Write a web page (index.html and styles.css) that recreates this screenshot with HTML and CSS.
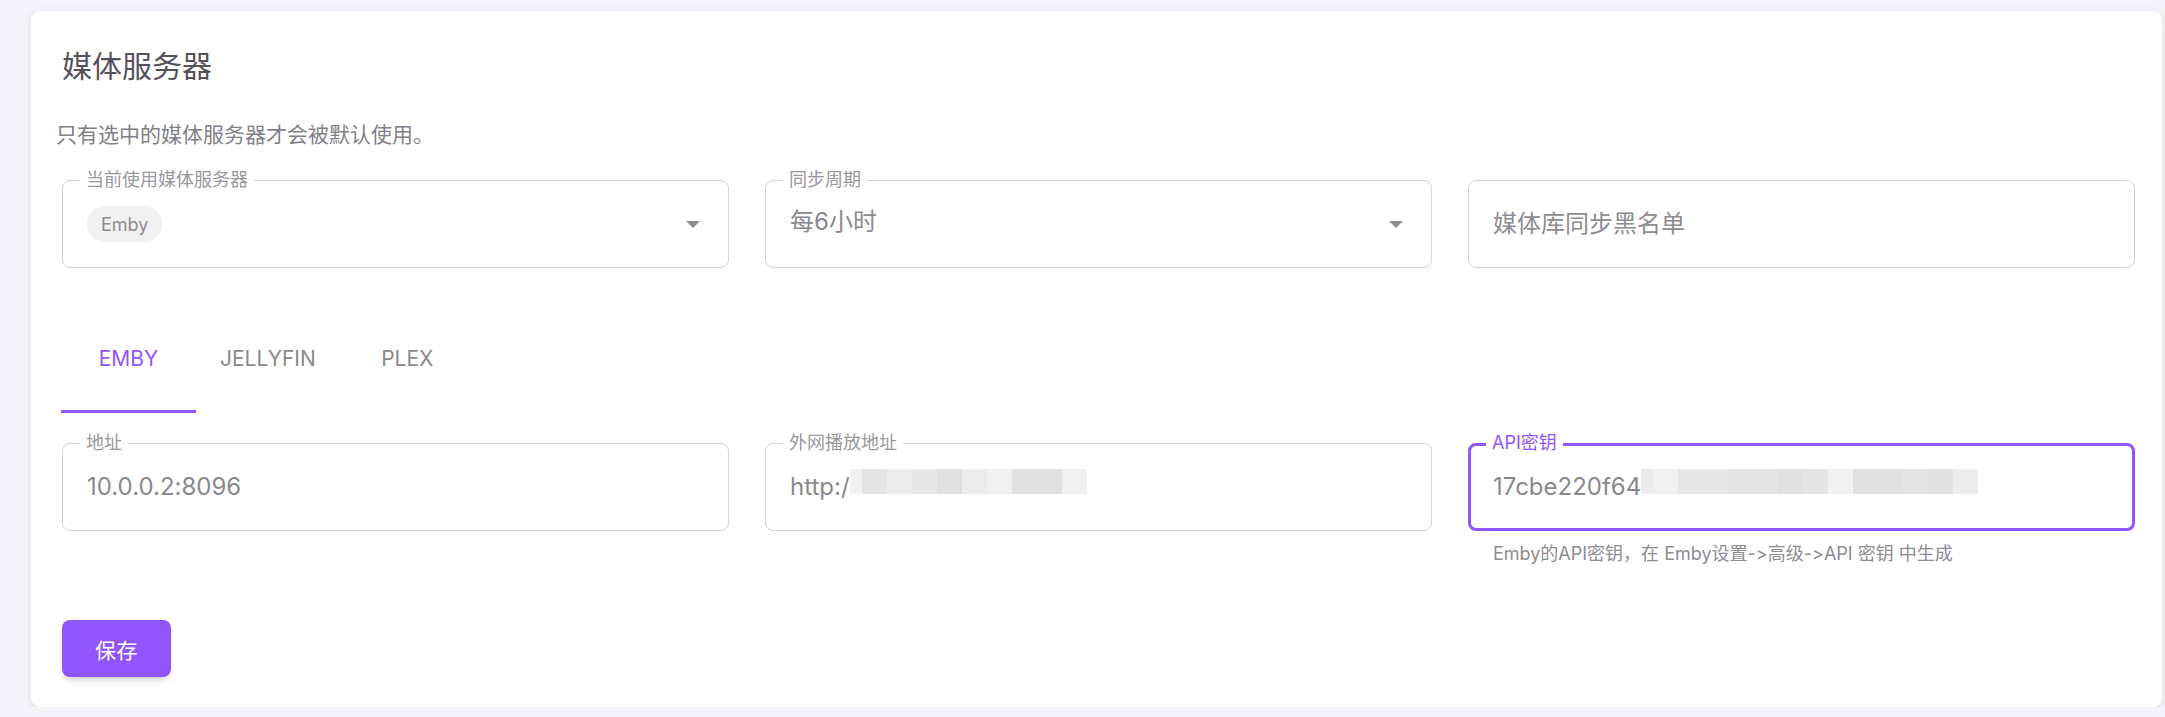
FILE: index.html
```html
<!DOCTYPE html>
<html lang="zh-CN">
<head>
    <meta charset="UTF-8">
    <meta name="viewport" content="width=device-width, initial-scale=1.0">
    <title>媒体服务器</title>
    <link rel="stylesheet" href="styles.css">
</head>
<body>
    <div class="card">
        <h2 class="card-title">媒体服务器</h2>
        <p class="card-subtitle">只有选中的媒体服务器才会被默认使用。</p>

        <div class="row">
            <div class="col">
                <div class="field">
                    <span class="field-label">当前使用媒体服务器</span>
                    <span class="chip">Emby</span>
                    <svg class="caret" width="14" height="7" viewBox="0 0 14 7"><path d="M0 0 L14 0 L7 7 Z" /></svg>
                </div>
            </div>
            <div class="col">
                <div class="field">
                    <span class="field-label">同步周期</span>
                    <span class="field-value select-value">每6小时</span>
                    <svg class="caret" width="14" height="7" viewBox="0 0 14 7"><path d="M0 0 L14 0 L7 7 Z" /></svg>
                </div>
            </div>
            <div class="col">
                <div class="field">
                    <span class="field-placeholder">媒体库同步黑名单</span>
                </div>
            </div>
        </div>

        <div class="tabs">
            <div class="tab active">EMBY</div>
            <div class="tab">JELLYFIN</div>
            <div class="tab">PLEX</div>
        </div>

        <div class="row row-second">
            <div class="col">
                <div class="field">
                    <span class="field-label">地址</span>
                    <span class="field-value">10.0.0.2:8096</span>
                </div>
            </div>
            <div class="col">
                <div class="field">
                    <span class="field-label">外网播放地址</span>
                    <span class="field-value">http:/<span class="blur"><i class="px-first px-l1"></i><i class="px-d2"></i><i class="px-l2"></i><i class="px-d1"></i><i class="px-d3"></i><i class="px-l2"></i><i class="px-l1"></i><i class="px-d3"></i><i class="px-d3"></i><i class="px-l1"></i></span></span>
                </div>
            </div>
            <div class="col">
                <div class="field focused">
                    <span class="field-label">API密钥</span>
                    <span class="field-value">17cbe220f64<span class="blur"><i class="px-first px-l2"></i><i class="px-l1"></i><i class="px-d1"></i><i class="px-d1"></i><i class="px-d2"></i><i class="px-d2"></i><i class="px-d3"></i><i class="px-d2"></i><i class="px-l1"></i><i class="px-d3"></i><i class="px-d3"></i><i class="px-d2"></i><i class="px-d3"></i><i class="px-l2"></i></span></span>
                </div>
                <div class="field-hint">Emby的API密钥，在 Emby设置-&gt;高级-&gt;API 密钥 中生成</div>
            </div>
        </div>

        <button class="btn-save">保存</button>
    </div>
</body>
</html>
```

FILE: styles.css
```css
body {
    margin: 0;
    padding: 11px 0 0 31px;
    background-color: #f4f5fa;
    font-family: Inter, "Noto Sans CJK SC", sans-serif;
    font-feature-settings: "calt" 0;
    font-variant-ligatures: none;
    overflow: hidden;
}
.card {
    box-sizing: border-box;
    width: 2131px;
    padding: 31px 27px 30px 31px;
    background-color: #fff;
    border-radius: 9px;
    box-shadow: 0 2px 10px 0 rgba(58, 53, 65, 0.12);
}
.card-title {
    margin: 0;
    font-size: 30px;
    font-weight: 400;
    line-height: 48px;
    color: #55515c;
}
.card-subtitle {
    margin: 29px 0 0 -6px;
    font-size: 21px;
    line-height: 32px;
    color: #827f88;
}
.row {
    display: grid;
    grid-template-columns: repeat(3, 1fr);
    column-gap: 36px;
    margin-top: 29px;
}
.row-second {
    margin-top: 30px;
}
.field {
    position: relative;
    box-sizing: border-box;
    height: 88px;
    display: flex;
    align-items: center;
    padding: 0 24px;
    border: 1px solid #d4d3d6;
    border-radius: 8px;
}
.field.focused {
    border: 3px solid #9155fd;
    padding: 0 22px;
}
.field-label {
    position: absolute;
    top: -12px;
    left: 17px;
    padding: 0 6px;
    background-color: #fff;
    font-size: 18px;
    line-height: 22px;
    color: #9a979e;
}
.field.focused .field-label {
    top: -14px;
    left: 15px;
    color: #9155fd;
}
.field-value {
    display: flex;
    align-items: center;
    font-size: 24px;
    line-height: 30px;
    color: #8b8890;
}
.select-value {
    margin-bottom: 5px;
}
.field-placeholder {
    font-size: 24px;
    line-height: 30px;
    color: #8e8b93;
}
.chip {
    display: inline-flex;
    align-items: center;
    height: 36px;
    padding: 0 14px;
    border-radius: 18px;
    background-color: #f1f1f2;
    font-size: 18px;
    color: #8f8c94;
}
.caret {
    margin-left: auto;
    margin-right: 4px;
    fill: #8f8c93;
}
.blur {
    display: inline-flex;
    margin-bottom: 11px;
}
.blur i {
    display: block;
    width: 25px;
    height: 25px;
}
.blur i.px-first {
    width: 12px;
}
.px-l1 { background-color: #f1f1f1; }
.px-l2 { background-color: #ececec; }
.px-d1 { background-color: #e8e8e8; }
.px-d2 { background-color: #e5e5e5; }
.px-d3 { background-color: #e1e1e1; }
.field-hint {
    margin-top: 11px;
    padding-left: 25px;
    font-size: 18px;
    line-height: 24px;
    color: #8e8b93;
}
.tabs {
    display: flex;
    margin-top: 73px;
    margin-left: -1px;
}
.tab {
    box-sizing: border-box;
    height: 72px;
    min-width: 135px;
    padding: 6px 24px 0;
    text-align: center;
    font-size: 21px;
    line-height: 24px;
    color: #8b8890;
    border-bottom: 3px solid transparent;
}
.tab.active {
    color: #9155fd;
    border-bottom-color: #9155fd;
}
.btn-save {
    display: block;
    margin-top: 54px;
    width: 109px;
    height: 57px;
    padding: 0;
    border: none;
    border-radius: 8px;
    background-color: #9155fd;
    color: #fff;
    font-family: Inter, "Noto Sans CJK SC", sans-serif;
    font-size: 21px;
    letter-spacing: 0.5px;
    box-shadow: 0 4px 9px -4px rgba(58, 53, 65, 0.42);
    cursor: pointer;
}
```
